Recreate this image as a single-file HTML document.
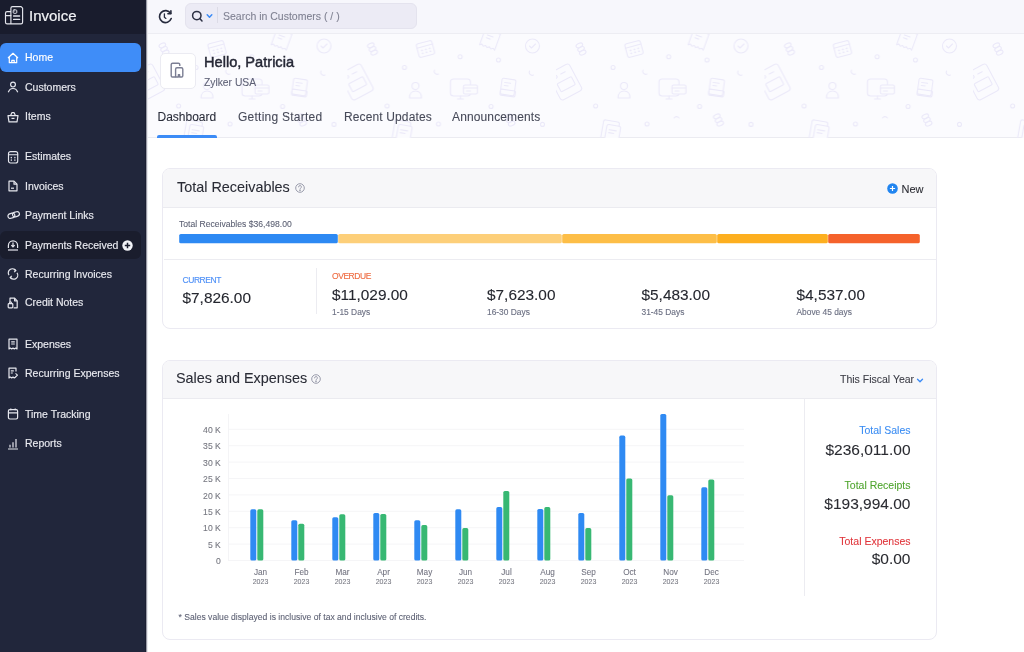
<!DOCTYPE html>
<html><head><meta charset="utf-8">
<style>
*{box-sizing:border-box;margin:0;padding:0}
html,body{width:1024px;height:652px;overflow:hidden;background:#fff;font-family:"Liberation Sans",sans-serif;color:#21263c}
body{position:relative;will-change:transform}
body *{-webkit-text-stroke:0.08px currentColor}
.abs{position:absolute;white-space:nowrap}
#side{position:absolute;left:0;top:0;width:146px;height:652px;background:#21263b}
#logo{position:absolute;left:0;top:0;width:146px;height:34px;background:#191c2d}
.nav{position:absolute;left:0;width:141px;height:29px;color:#e9eaf0;font-size:10.5px;line-height:29px;white-space:nowrap}
.nav .t{position:absolute;left:25px;top:0;-webkit-text-stroke:0.15px currentColor}
.nav svg{position:absolute;left:7px;top:8.5px}
.nav.act{background:#3f8df8;color:#fff;border-radius:6px}
.nav.hov{background:#1a1d2d;border-radius:6px}
#top{position:absolute;left:146px;top:0;width:878px;height:34px;background:#f7f7fc;border-bottom:1px solid #ededf3}
#hero{position:absolute;left:146px;top:34px;width:878px;height:104px;background:#fbfbfe;border-bottom:1px solid #ebebf1}
.card{position:absolute;background:#fff;border:1px solid #ebeaf2;border-radius:8px;overflow:hidden}
.chead{position:absolute;left:0;top:0;right:0;background:#f7f7f9;border-bottom:1px solid #ebebf0}
.tab{font-size:12px;line-height:16px;color:#474a59}
.ctitle{font-size:14.4px;line-height:17px;color:#2a2c36}
.lbl{font-size:8.5px;line-height:11px;letter-spacing:-0.45px;-webkit-text-stroke:0.12px currentColor}
.amt{font-size:15.4px;line-height:18px;color:#25272f;-webkit-text-stroke:0.1px #25272f}
.sub{font-size:8.4px;line-height:12px;color:#6b6f82;-webkit-text-stroke:0.12px currentColor}
.rs{right:113.5px;font-size:10.5px;line-height:14px;text-align:right}
.rv{right:113.5px;font-size:15.5px;line-height:18px;color:#2a2b31;text-align:right}
.ylab{left:180px;width:40.8px;text-align:right;font-size:8.6px;line-height:10px;color:#74757f}
.mlab{width:40px;text-align:center;font-size:8.2px;line-height:10px;color:#737480}
.ylr{width:40px;text-align:center;font-size:7px;line-height:9px;color:#787983}
</style></head><body>
<div id="side">
  <div id="logo">
    <svg class="abs" style="left:0;top:0" width="30" height="30" viewBox="0 0 30 30" fill="none" stroke="#e4e5ec" stroke-width="1.15" stroke-linejoin="round" stroke-linecap="round">
      <path d="M10.9 23.8V8.2c0-.9.7-1.6 1.6-1.6h8.6l1.5 1.5v14.1c0 .9-.7 1.6-1.6 1.6H7.1c-.9 0-1.6-.7-1.6-1.6V13.2c0-.9.7-1.6 1.6-1.6h3.8"/>
      <path d="M5.5 15.6h5.4"/>
      <rect x="13.2" y="9.9" width="3.6" height="3.4" rx="0.9" stroke-width="1"/>
      <path d="M14.5 11.1l.9.5-.9.5z" fill="#e4e5ec" stroke="none"/>
      <path d="M13.6 16h6M13.6 19.4h6" stroke-width="1.3"/>
    </svg>
    <div class="abs" style="left:29px;top:7px;font-size:15px;line-height:18px;color:#f2f3f7;-webkit-text-stroke:0.2px #f2f3f7">Invoice</div>
  </div>
  <div class="nav act" style="top:43px;height:29px"><svg width="12" height="12" viewBox="0 0 12 12" fill="none" stroke="#fff" stroke-width="1.2" stroke-linejoin="round"><path d="M1 6L6 1.3 11 6M2.3 4.9v5.8h7.4V4.9"/><path d="M4.8 10.7V8.3h2.4v2.4"/></svg><span class="t">Home</span></div>
  <div class="nav" style="top:72.5px"><svg width="12" height="12" viewBox="0 0 12 12" fill="none" stroke="#e6e7ee" stroke-width="1.2"><circle cx="6" cy="3.6" r="2.4"/><path d="M1.3 11.3c.8-2.6 2.6-3.8 4.7-3.8s3.9 1.2 4.7 3.8"/></svg><span class="t">Customers</span></div>
  <div class="nav" style="top:102px"><svg width="12" height="12" viewBox="0 0 12 12" fill="none" stroke="#e6e7ee" stroke-width="1.2" stroke-linejoin="round"><path d="M1 4.6h10l-1 6.2H2z"/><path d="M3.6 4.4L5 1.6h2l1.4 2.8"/><path d="M4.5 7.4h3"/></svg><span class="t">Items</span></div>
  <div class="nav" style="top:142px"><svg width="12" height="13" viewBox="0 0 12 13" fill="none" stroke="#e6e7ee" stroke-width="1.15" stroke-linecap="round"><rect x="1.5" y="0.6" width="9.2" height="11.4" rx="2"/><path d="M1.5 3.7h9.2"/><path d="M4.3 6.3v.5M4.3 8.8v.5M7.9 6.3v.5M7.9 8.8v.5" stroke-width="1.3"/></svg><span class="t">Estimates</span></div>
  <div class="nav" style="top:171.5px"><svg width="12" height="12" viewBox="0 0 12 12" fill="none" stroke="#e6e7ee" stroke-width="1.2" stroke-linejoin="round"><path d="M2 1.2h5l3 3v6.6H2z"/><path d="M7 1.2v3h3"/><path d="M4 8.2h3"/></svg><span class="t">Invoices</span></div>
  <div class="nav" style="top:200.5px"><svg width="14" height="12" viewBox="0 0 14 12" fill="none" stroke="#e6e7ee" stroke-width="1.2"><g transform="rotate(-18 7 6)"><rect x="0.8" y="3.6" width="7" height="4.6" rx="2.3"/><rect x="5.6" y="3.6" width="7" height="4.6" rx="2.3"/></g></svg><span class="t">Payment Links</span></div>
  <div class="nav hov" style="top:230.5px;height:28.5px"><svg width="12" height="12" viewBox="0 0 12 12" fill="none" stroke="#e6e7ee" stroke-width="1.2"><path d="M1.4 9V6.4a4.6 4.6 0 0 1 9.2 0V9"/><path d="M1 11h10"/><path d="M6 3.6v4.2M4.3 6.2L6 7.9l1.7-1.7"/></svg><span class="t">Payments Received</span>
    <svg style="left:122px;top:9px" width="11" height="11" viewBox="0 0 11 11"><circle cx="5.5" cy="5.5" r="5.2" fill="#f2f3f7"/><path d="M5.5 2.8v5.4M2.8 5.5h5.4" stroke="#1a1d2d" stroke-width="1.5"/></svg></div>
  <div class="nav" style="top:259.5px"><svg width="12" height="12" viewBox="0 0 12 12" fill="none" stroke="#e6e7ee" stroke-width="1.2"><path d="M2 7.2A4 4 0 0 1 8.6 2.6M10 4.8a4 4 0 0 1-6.6 4.6"/><path d="M7.2 1l1.6 1.6-1.6 1.6M4.8 11L3.2 9.4l1.6-1.6"/></svg><span class="t">Recurring Invoices</span></div>
  <div class="nav" style="top:288px"><svg width="12" height="12" viewBox="0 0 12 12" fill="none" stroke="#e6e7ee" stroke-width="1.2" stroke-linejoin="round"><path d="M3 5V1.2h4.6l2.6 2.6v7H6.6"/><path d="M7.6 1.2v2.6h2.6"/><rect x="1.2" y="6.6" width="4.6" height="4.2" rx="0.8"/><path d="M2.6 6.6V5.8a.9.9 0 0 1 1.8 0v.8"/></svg><span class="t">Credit Notes</span></div>
  <div class="nav" style="top:329.5px"><svg width="12" height="12" viewBox="0 0 12 12" fill="none" stroke="#e6e7ee" stroke-width="1.2" stroke-linejoin="round"><path d="M2 1.2h8v9.8l-1.3-.9-1.4.9-1.3-.9-1.3.9-1.4-.9L2 11z"/><path d="M4.2 3.8h3.6M4.2 6h3.6"/></svg><span class="t">Expenses</span></div>
  <div class="nav" style="top:358.5px"><svg width="12" height="12" viewBox="0 0 12 12" fill="none" stroke="#e6e7ee" stroke-width="1.2" stroke-linejoin="round"><path d="M9 4.6V1.2H2V11l1.3-.9 1.4.9 1.3-.9 1.3.9 1.4-.9.3.2"/><path d="M3.8 3.8h3M3.8 6h2"/><path d="M8.5 6.4l2 1.8-2 1.8" stroke-width="1.1"/></svg><span class="t">Recurring Expenses</span></div>
  <div class="nav" style="top:399.5px"><svg width="12" height="12" viewBox="0 0 12 12" fill="none" stroke="#e6e7ee" stroke-width="1.2"><rect x="1.4" y="1.6" width="9.2" height="9.4" rx="1.4"/><path d="M1.4 4.8h9.2M3.8 0.6v1.6M8.2 0.6v1.6"/></svg><span class="t">Time Tracking</span></div>
  <div class="nav" style="top:429px"><svg width="12" height="12" viewBox="0 0 12 12" fill="none" stroke="#e6e7ee" stroke-width="1.2"><path d="M1 11h10M3 9.4V6.8M6 9.4V4.2M9 9.4V1"/></svg><span class="t">Reports</span></div>
</div>

<div id="top"></div>
<svg class="abs" style="left:158px;top:9px" width="15" height="15" viewBox="0 0 15 15" fill="none" stroke="#262a3d" stroke-width="1.6" stroke-linecap="round"><path d="M12.6 4.4A6 6 0 1 0 13.2 9.6"/><path d="M12.9 1.8v3h-3" stroke-linejoin="round"/><path d="M6.4 4.8v3.4l1.5 1.2" stroke-width="1.3"/></svg>
<div class="abs" style="left:185px;top:2.5px;width:232px;height:26px;background:#ecebf5;border:1px solid #e4e3ee;border-radius:6px"></div>
<svg class="abs" style="left:191px;top:10px" width="13" height="12" viewBox="0 0 13 12" fill="none" stroke="#2d3144" stroke-width="1.5"><circle cx="5.8" cy="5.6" r="4.2"/><path d="M8.8 8.6l2.2 2.4" stroke-linecap="round"/></svg>
<svg class="abs" style="left:206px;top:13px" width="7" height="6" viewBox="0 0 7 6" fill="none" stroke="#3b8bf6" stroke-width="1.5" stroke-linecap="round" stroke-linejoin="round"><path d="M1.2 1.8L3.5 4.2 5.8 1.8"/></svg>
<div class="abs" style="left:217px;top:7px;width:1px;height:16px;background:#dcdbe6"></div>
<div class="abs" style="left:223px;top:9px;font-size:10.5px;line-height:14px;color:#7f8091;white-space:nowrap">Search in Customers ( / )</div>

<div id="hero"></div>
<svg class="abs" style="left:146px;top:34px" width="878" height="104" viewBox="0 0 878 104">
<defs><pattern id="pt" x="410" y="0" width="208.5" height="208" patternUnits="userSpaceOnUse">
<g fill="none" stroke="#ebe9f9" stroke-width="1.1" stroke-linecap="round" stroke-linejoin="round">
<g transform="translate(25 15) rotate(-25)"><ellipse cx="0" cy="-4" rx="3.5" ry="2"/><ellipse cx="0" cy="0" rx="3.5" ry="2"/><ellipse cx="0" cy="4" rx="3.5" ry="2"/></g>
<g transform="translate(78 15) rotate(-15)"><rect x="-8" y="-7" width="16" height="14" rx="2"/><path d="M-8 -3h16"/><path d="M-4 0.5h.5M0 0.5h.5M4 0.5h.5M-4 3.5h.5M0 3.5h.5M4 3.5h.5" stroke-width="1.6"/></g>
<g transform="translate(142 7) rotate(20)"><path d="M-8 -10h16v17l-2-1.5-2 1.5-2-1.5-2 1.5-2-1.5-2 1.5-2-1.5-2 1.5z"/><path d="M-4 -5h6M-4 -2h4"/></g>
<g transform="translate(185 12)"><circle r="7"/><path d="M-3 0l2 2 4-4"/></g>
<circle cx="112.7" cy="22.7" r="2"/><circle cx="151" cy="26" r="2"/><circle cx="57" cy="33.5" r="2"/><circle cx="39.6" cy="72" r="2"/><circle cx="143.6" cy="72.5" r="2"/><circle cx="91" cy="90" r="2"/><circle cx="195" cy="90.4" r="2"/>
<path d="M87 36a3 3 0 0 0 4 4"/><path d="M182 37a3 3 0 0 0 4 4"/><path d="M118 84a3 3 0 0 1 5 0"/>
<g transform="translate(9 48) rotate(-28)"><rect x="-12" y="-15" width="24" height="30" rx="3"/><rect x="-8" y="-2" width="16" height="9" rx="1"/><circle cx="-6" cy="-9" r="1.6"/><path d="M0 -9h5"/></g>
<g transform="translate(68 57)"><circle cx="0" cy="-5" r="3.5"/><path d="M-6 7c0-5 3-7 6-7s6 2 6 7z"/></g>
<g transform="translate(116 55)"><rect x="-13" y="-10" width="20" height="17" rx="3"/><path d="M-3 7v3M-6 10h6"/><rect x="0" y="-4" width="14" height="9" rx="1.5" fill="#fbfbfe"/><path d="M0 -1h14M3 2h4"/></g>
<g transform="translate(160.5 54) rotate(8)"><rect x="-7" y="-9" width="14" height="16" rx="1.5"/><path d="M-4 -5h6M-4 -2h4"/><rect x="-7" y="2" width="15" height="6" rx="1"/></g>
<g transform="translate(162.5 86) rotate(-25)"><ellipse cx="0" cy="-4" rx="3.5" ry="2"/><ellipse cx="0" cy="0" rx="3.5" ry="2"/><ellipse cx="0" cy="4" rx="3.5" ry="2"/></g>
<g transform="translate(55 97) rotate(10)"><rect x="-9" y="-10" width="16" height="20" rx="2"/><rect x="-5" y="-6" width="14" height="18" rx="2" fill="#fbfbfe"/><path d="M-2 -1h7M-2 2h5"/></g>
</g></pattern></defs>
<rect width="878" height="104" fill="url(#pt)"/>
</svg>

<div class="abs" style="left:159.5px;top:52.5px;width:36px;height:36px;background:#fff;border:1px solid #ebebf2;border-radius:5px"></div>
<svg class="abs" style="left:170px;top:62px" width="15" height="16" viewBox="0 0 15 16" fill="none" stroke="#7b7e93" stroke-width="1.4" stroke-linejoin="round"><path d="M9.8 4V2.6c0-.8-.6-1.4-1.4-1.4H2.6c-.8 0-1.4.6-1.4 1.4v11.2c0 .6.6 1.2 1.2 1.2h3.2"/><path d="M5.6 15V7.2c0-.8.6-1.4 1.4-1.4h4.4c.8 0 1.4.6 1.4 1.4v6.6c0 .6-.6 1.2-1.2 1.2H9.6v-2.4H8.4V15z"/></svg>
<div class="abs" style="left:204px;top:54px;font-size:14.6px;line-height:17px;-webkit-text-stroke:0.45px #262836;color:#262836;white-space:nowrap">Hello, Patricia</div>
<div class="abs" style="left:204px;top:75.5px;font-size:10.3px;line-height:14px;color:#5e6176;white-space:nowrap">Zylker USA</div>

<div class="abs tab" style="left:157.5px;top:108.8px;color:#2a2d3a">Dashboard</div>
<div class="abs tab" style="left:238px;top:108.8px;letter-spacing:0.25px">Getting Started</div>
<div class="abs tab" style="left:344px;top:108.8px;letter-spacing:0.13px">Recent Updates</div>
<div class="abs tab" style="left:452px;top:108.8px;letter-spacing:0.13px">Announcements</div>
<div class="abs" style="left:157px;top:135px;width:60px;height:3px;background:#3b8bf6;border-radius:2px 2px 0 0"></div>

<!-- Card 1 -->
<div class="card" style="left:162px;top:168px;width:774.5px;height:160.5px">
  <div class="chead" style="height:38.5px"></div>
</div>
<div class="abs ctitle" style="left:177px;top:179px">Total Receivables</div>
<svg class="abs" style="left:294.5px;top:183px" width="10" height="10" viewBox="0 0 10 10" fill="none" stroke="#8e91a3" stroke-width="0.9"><circle cx="5" cy="5" r="4.3"/><path d="M3.6 3.9a1.4 1.4 0 1 1 2 1.3c-.4.2-.6.5-.6.9v.3" stroke-linecap="round"/><circle cx="5" cy="7.6" r=".35" fill="#8e91a3"/></svg>
<svg class="abs" style="left:886.5px;top:183px" width="11" height="11" viewBox="0 0 11 11"><circle cx="5.5" cy="5.5" r="5.3" fill="#2185f0"/><path d="M5.5 2.9v5.2M2.9 5.5h5.2" stroke="#fff" stroke-width="1.2"/></svg>
<div class="abs" style="left:901.5px;top:182px;font-size:11px;line-height:14px;color:#2c2d34">New</div>
<div class="abs" style="left:179px;top:218px;font-size:8.6px;line-height:13px;color:#5b5f72;white-space:nowrap">Total Receivables $36,498.00</div>
<svg class="abs" style="left:0;top:0" width="1024" height="260" viewBox="0 0 1024 260"><rect x="179.2" y="234" width="158.6" height="9.3" rx="1.6" fill="#2d89f3"/><rect x="338.2" y="234" width="223.6" height="9.3" rx="1.6" fill="#fdcf79"/><rect x="562.2" y="234" width="154.6" height="9.3" rx="1.6" fill="#fdbe47"/><rect x="717.2" y="234" width="110.6" height="9.3" rx="1.6" fill="#fdaf1f"/><rect x="828.2" y="234" width="91.6" height="9.3" rx="1.6" fill="#f5622b"/></svg>
<div class="abs" style="left:163.5px;top:259px;width:772px;height:1px;background:#ececf1"></div>
<div class="abs lbl" style="left:182.5px;top:275px;color:#4c8ff7">CURRENT</div>
<div class="abs amt" style="left:182.5px;top:289px">$7,826.00</div>
<div class="abs" style="left:316px;top:268px;width:1px;height:46px;background:#ececf1"></div>
<div class="abs lbl" style="left:332px;top:271px;color:#ee6a3f">OVERDUE</div>
<div class="abs amt" style="left:332px;top:285.5px">$11,029.00</div>
<div class="abs sub" style="left:332px;top:306px">1-15 Days</div>
<div class="abs amt" style="left:487px;top:285.5px">$7,623.00</div>
<div class="abs sub" style="left:487px;top:306px">16-30 Days</div>
<div class="abs amt" style="left:641.5px;top:285.5px">$5,483.00</div>
<div class="abs sub" style="left:641.5px;top:306px">31-45 Days</div>
<div class="abs amt" style="left:796.5px;top:285.5px">$4,537.00</div>
<div class="abs sub" style="left:796.5px;top:306px">Above 45 days</div>

<!-- Card 2 -->
<div class="card" style="left:162px;top:359.5px;width:774.5px;height:280.5px">
  <div class="chead" style="height:38px"></div>
</div>
<div class="abs ctitle" style="left:176px;top:369.5px">Sales and Expenses</div>
<svg class="abs" style="left:311px;top:373.5px" width="10" height="10" viewBox="0 0 10 10" fill="none" stroke="#8e91a3" stroke-width="0.9"><circle cx="5" cy="5" r="4.3"/><path d="M3.6 3.9a1.4 1.4 0 1 1 2 1.3c-.4.2-.6.5-.6.9v.3" stroke-linecap="round"/><circle cx="5" cy="7.6" r=".35" fill="#8e91a3"/></svg>
<div class="abs" style="left:840px;top:372px;font-size:10.5px;line-height:14px;color:#3b3c45;white-space:nowrap">This Fiscal Year</div>
<svg class="abs" style="left:916px;top:377px" width="8" height="7" viewBox="0 0 8 7" fill="none" stroke="#3b8bf6" stroke-width="1.4" stroke-linecap="round" stroke-linejoin="round"><path d="M1.5 2.2L4 4.7 6.5 2.2"/></svg>
<div class="abs" style="left:804px;top:398px;width:1px;height:198px;background:#ececf1"></div>
<svg class="abs" style="left:0;top:0" width="1024" height="652" viewBox="0 0 1024 652">
<line x1="228" y1="560.5" x2="744" y2="560.5" stroke="#f5f5f7" stroke-width="1"/>
<line x1="228" y1="544.1" x2="744" y2="544.1" stroke="#f5f5f7" stroke-width="1"/>
<line x1="228" y1="527.7" x2="744" y2="527.7" stroke="#f5f5f7" stroke-width="1"/>
<line x1="228" y1="511.3" x2="744" y2="511.3" stroke="#f5f5f7" stroke-width="1"/>
<line x1="228" y1="494.9" x2="744" y2="494.9" stroke="#f5f5f7" stroke-width="1"/>
<line x1="228" y1="478.5" x2="744" y2="478.5" stroke="#f5f5f7" stroke-width="1"/>
<line x1="228" y1="462.1" x2="744" y2="462.1" stroke="#f5f5f7" stroke-width="1"/>
<line x1="228" y1="445.7" x2="744" y2="445.7" stroke="#f5f5f7" stroke-width="1"/>
<line x1="228" y1="429.3" x2="744" y2="429.3" stroke="#f5f5f7" stroke-width="1"/>
<line x1="228.5" y1="414" x2="228.5" y2="561" stroke="#f4f4f6" stroke-width="1"/>
<rect x="250.3" y="509.33" width="6" height="51.17" rx="1.6" fill="#2f8af3"/>
<rect x="257.3" y="509.33" width="6" height="51.17" rx="1.6" fill="#38b873"/>
<rect x="291.3" y="520.16" width="6" height="40.34" rx="1.6" fill="#2f8af3"/>
<rect x="298.3" y="523.76" width="6" height="36.74" rx="1.6" fill="#38b873"/>
<rect x="332.3" y="517.20" width="6" height="43.30" rx="1.6" fill="#2f8af3"/>
<rect x="339.3" y="514.25" width="6" height="46.25" rx="1.6" fill="#38b873"/>
<rect x="373.3" y="512.94" width="6" height="47.56" rx="1.6" fill="#2f8af3"/>
<rect x="380.3" y="513.92" width="6" height="46.58" rx="1.6" fill="#38b873"/>
<rect x="414.3" y="520.16" width="6" height="40.34" rx="1.6" fill="#2f8af3"/>
<rect x="421.3" y="525.08" width="6" height="35.42" rx="1.6" fill="#38b873"/>
<rect x="455.3" y="509.33" width="6" height="51.17" rx="1.6" fill="#2f8af3"/>
<rect x="462.3" y="528.03" width="6" height="32.47" rx="1.6" fill="#38b873"/>
<rect x="496.3" y="507.04" width="6" height="53.46" rx="1.6" fill="#2f8af3"/>
<rect x="503.3" y="490.96" width="6" height="69.54" rx="1.6" fill="#38b873"/>
<rect x="537.3" y="509.00" width="6" height="51.50" rx="1.6" fill="#2f8af3"/>
<rect x="544.3" y="507.04" width="6" height="53.46" rx="1.6" fill="#38b873"/>
<rect x="578.3" y="512.94" width="6" height="47.56" rx="1.6" fill="#2f8af3"/>
<rect x="585.3" y="528.03" width="6" height="32.47" rx="1.6" fill="#38b873"/>
<rect x="619.3" y="435.53" width="6" height="124.97" rx="1.6" fill="#2f8af3"/>
<rect x="626.3" y="478.50" width="6" height="82.00" rx="1.6" fill="#38b873"/>
<rect x="660.3" y="413.88" width="6" height="146.62" rx="1.6" fill="#2f8af3"/>
<rect x="667.3" y="495.23" width="6" height="65.27" rx="1.6" fill="#38b873"/>
<rect x="701.3" y="487.36" width="6" height="73.14" rx="1.6" fill="#2f8af3"/>
<rect x="708.3" y="479.48" width="6" height="81.02" rx="1.6" fill="#38b873"/>
</svg>
<div class="abs ylab" style="top:556.1px">0</div>
<div class="abs ylab" style="top:539.7px">5 K</div>
<div class="abs ylab" style="top:523.3px">10 K</div>
<div class="abs ylab" style="top:506.9px">15 K</div>
<div class="abs ylab" style="top:490.5px">20 K</div>
<div class="abs ylab" style="top:474.1px">25 K</div>
<div class="abs ylab" style="top:457.7px">30 K</div>
<div class="abs ylab" style="top:441.3px">35 K</div>
<div class="abs ylab" style="top:424.9px">40 K</div>
<div class="abs mlab" style="left:240.5px;top:568px">Jan</div>
<div class="abs ylr" style="left:240.5px;top:576.9px">2023</div>
<div class="abs mlab" style="left:281.5px;top:568px">Feb</div>
<div class="abs ylr" style="left:281.5px;top:576.9px">2023</div>
<div class="abs mlab" style="left:322.5px;top:568px">Mar</div>
<div class="abs ylr" style="left:322.5px;top:576.9px">2023</div>
<div class="abs mlab" style="left:363.5px;top:568px">Apr</div>
<div class="abs ylr" style="left:363.5px;top:576.9px">2023</div>
<div class="abs mlab" style="left:404.5px;top:568px">May</div>
<div class="abs ylr" style="left:404.5px;top:576.9px">2023</div>
<div class="abs mlab" style="left:445.5px;top:568px">Jun</div>
<div class="abs ylr" style="left:445.5px;top:576.9px">2023</div>
<div class="abs mlab" style="left:486.5px;top:568px">Jul</div>
<div class="abs ylr" style="left:486.5px;top:576.9px">2023</div>
<div class="abs mlab" style="left:527.5px;top:568px">Aug</div>
<div class="abs ylr" style="left:527.5px;top:576.9px">2023</div>
<div class="abs mlab" style="left:568.5px;top:568px">Sep</div>
<div class="abs ylr" style="left:568.5px;top:576.9px">2023</div>
<div class="abs mlab" style="left:609.5px;top:568px">Oct</div>
<div class="abs ylr" style="left:609.5px;top:576.9px">2023</div>
<div class="abs mlab" style="left:650.5px;top:568px">Nov</div>
<div class="abs ylr" style="left:650.5px;top:576.9px">2023</div>
<div class="abs mlab" style="left:691.5px;top:568px">Dec</div>
<div class="abs ylr" style="left:691.5px;top:576.9px">2023</div>
<div class="abs rs" style="top:423px;color:#3a8cf3">Total Sales</div>
<div class="abs rv" style="top:440.5px">$236,011.00</div>
<div class="abs rs" style="top:477.5px;color:#4fa52e">Total Receipts</div>
<div class="abs rv" style="top:495px">$193,994.00</div>
<div class="abs rs" style="top:534px;color:#e0353b">Total Expenses</div>
<div class="abs rv" style="top:550px">$0.00</div>
<div class="abs" style="left:178.5px;top:611px;font-size:8.6px;line-height:12px;color:#5b5f72;white-space:nowrap">* Sales value displayed is inclusive of tax and inclusive of credits.</div>

<div class="abs" style="left:145px;top:0;width:1px;height:652px;background:#1b1e31"></div><div class="abs" style="left:146px;top:0;width:1px;height:652px;background:#9a9ca7"></div><div class="abs" style="left:147px;top:0;width:1px;height:652px;background:#e8e8ec"></div>
</body></html>
